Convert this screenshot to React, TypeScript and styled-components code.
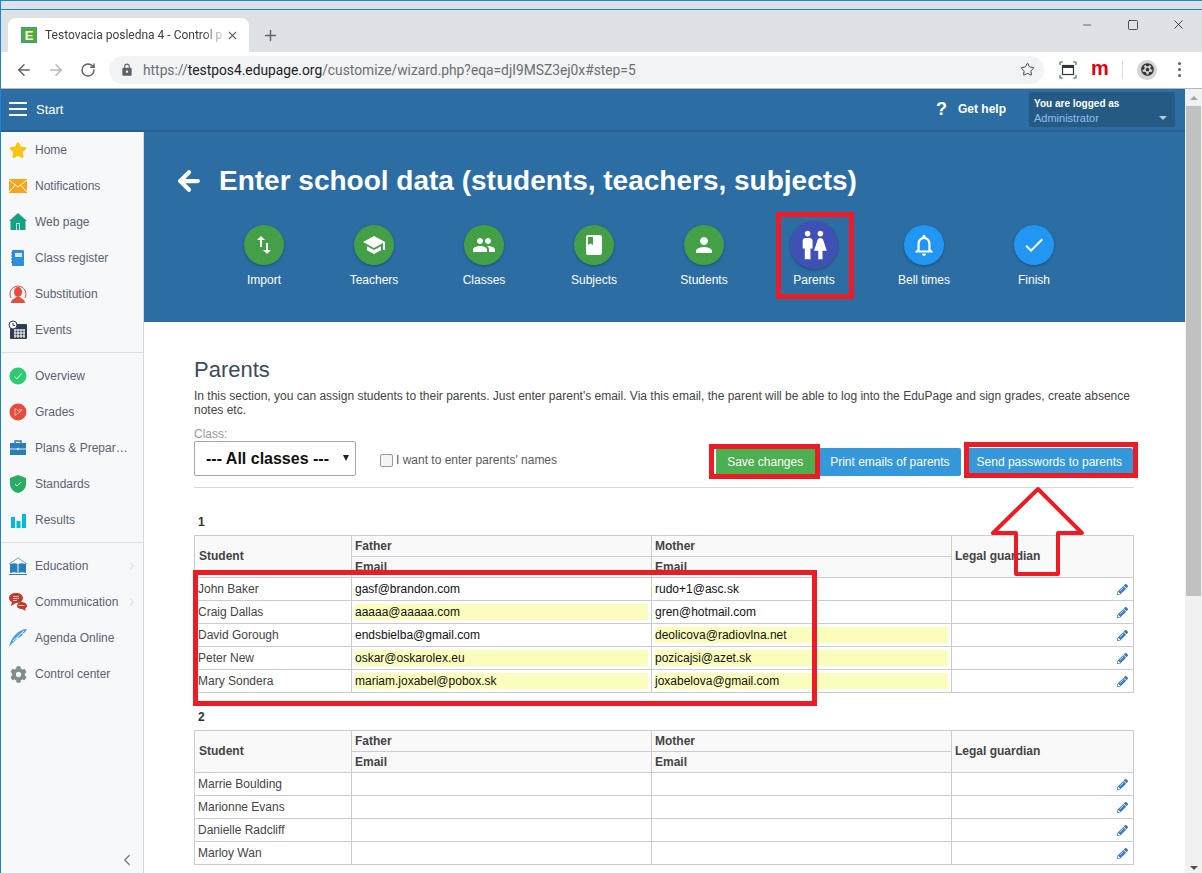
import { ReactNode } from 'react';
import styled, { createGlobalStyle } from 'styled-components';
import { ArrowLeft, ArrowRight, ChevronLeft, ChevronRight, Minus, Plus, RotateCw, Square, Star, X } from 'lucide-react';
import { FaCog, FaFutbol, FaPencilAlt, FaStar } from 'react-icons/fa';
import {
  MdBook,
  MdCheck,
  MdLock,
  MdNotificationsNone,
  MdPeople,
  MdPerson,
  MdSchool,
  MdSwapVert,
  MdWc,
} from 'react-icons/md';

const GlobalStyle = createGlobalStyle`
  html, body {
    margin: 0;
    padding: 0;
    height: 100%;
    overflow: hidden;
    background: #fff;
  }
  body {
    font-family: "Liberation Sans", Arial, sans-serif;
    font-size: 12px;
  }
  * {
    box-sizing: border-box;
  }
`;

const Window = styled.div`
  position: relative;
  display: flex;
  flex-direction: column;
  width: 1202px;
  height: 873px;
  overflow: hidden;
  border-left: 1px solid #1a86d8;
  background: #fff;
`;

const FrameTop = styled.div`
  height: 10px;
  flex-shrink: 0;
  background: #dee1e6;
  border-top: 1px solid #1a86d8;
  border-bottom: 1px solid #1a86d8;
`;

const TabStrip = styled.div`
  display: flex;
  align-items: flex-end;
  height: 42px;
  flex-shrink: 0;
  padding-left: 7px;
  background: #dee1e6;
`;

const Tab = styled.div`
  display: flex;
  align-items: center;
  width: 241px;
  height: 34px;
  padding: 0 10px 0 13px;
  background: #fff;
  border-radius: 8px 8px 0 0;
`;

const Favicon = styled.div`
  display: flex;
  align-items: center;
  justify-content: center;
  width: 16px;
  height: 16px;
  flex-shrink: 0;
  background: #4fae2c;
  border: 1px solid #3a8fd8;
  color: #fff;
  font-size: 13px;
  font-weight: 700;
  line-height: 1;
`;

const TabTitle = styled.div`
  flex: 1;
  margin-left: 8px;
  white-space: nowrap;
  font-family: Roboto, sans-serif;
  font-size: 12px;
  color: #3c4043;
  -webkit-mask-image: linear-gradient(to right, #000 88%, rgba(0, 0, 0, 0.15) 100%);
  mask-image: linear-gradient(to right, #000 88%, rgba(0, 0, 0, 0.15) 100%);
`;

const TabClose = styled.div`
  display: flex;
  margin-left: 2px;
  color: #5f6368;
`;

const NewTab = styled.div`
  display: flex;
  align-self: center;
  margin: 8px 0 0 13px;
  color: #5f6368;
`;

const WindowButtons = styled.div`
  display: flex;
  align-self: flex-start;
  align-items: center;
  gap: 31px;
  margin-left: auto;
  padding: 7px 16px 0 0;
  color: #111;
`;

const WindowButton = styled.div`
  display: flex;
  width: 15px;
  justify-content: center;
`;

const Toolbar = styled.div`
  display: flex;
  align-items: center;
  height: 37px;
  flex-shrink: 0;
  padding: 0 0 1px 13px;
  background: #fff;
  border-bottom: 1px solid #b8b8b8;
`;

const NavButton = styled.div<{ $dim?: boolean }>`
  display: flex;
  width: 20px;
  flex-shrink: 0;
  justify-content: center;
  margin-right: 12px;
  color: ${(p) => (p.$dim ? '#b5b7ba' : '#5f6368')};
`;

const AddressBar = styled.div`
  display: flex;
  align-items: center;
  width: 935px;
  height: 28px;
  flex-shrink: 0;
  margin-left: -1px;
  padding: 0 9px 0 11px;
  background: #f1f3f4;
  border-radius: 14px;
  color: #5f6368;
`;

const Url = styled.div`
  flex: 1;
  margin-left: 9px;
  font-family: Roboto, sans-serif;
  font-size: 13.8px;
  white-space: nowrap;
  color: #6b6f73;

  b {
    font-weight: 400;
    color: #202124;
  }
`;

const ToolIcon = styled.div<{ $w: number }>`
  display: flex;
  align-items: center;
  justify-content: center;
  width: ${(p) => p.$w}px;
  flex-shrink: 0;
`;

const RedM = styled.span`
  font-size: 20px;
  font-weight: 700;
  line-height: 1;
  color: #e60012;
  margin-top: -4px;
`;

const ToolSep = styled.div`
  width: 1px;
  height: 18px;
  background: #dadce0;
`;

const Avatar = styled.div`
  display: flex;
  align-items: center;
  justify-content: center;
  width: 20px;
  height: 20px;
  flex-shrink: 0;
  border-radius: 50%;
  background: #d4d4d4;
  color: #333;
`;

const Dots = styled.div`
  display: flex;
  flex-direction: column;
  gap: 3px;

  i {
    width: 3px;
    height: 3px;
    border-radius: 50%;
    background: #5f6368;
  }
`;

const Page = styled.div`
  display: flex;
  flex: 1;
  min-height: 0;
`;

const PageMain = styled.div`
  display: flex;
  flex: 1;
  flex-direction: column;
  min-width: 0;
`;

const TopBar = styled.div`
  display: flex;
  align-items: center;
  height: 43px;
  flex-shrink: 0;
  padding: 0 10px 1px 8px;
  background: #2c6ea3;
  border-bottom: 2px solid #265f8d;
  color: #fff;
`;

const Burger = styled.div`
  display: flex;
  flex-direction: column;
  gap: 4px;
  width: 18px;

  i {
    height: 2px;
    background: #fff;
  }
`;

const StartLabel = styled.span`
  margin-left: 9px;
  font-size: 13px;
`;

const HelpMark = styled.span`
  margin-left: auto;
  font-size: 18px;
  font-weight: 700;
`;

const HelpText = styled.span`
  margin-left: 11px;
  font-size: 12px;
  font-weight: 700;
`;

const UserBox = styled.div`
  position: relative;
  width: 146px;
  height: 35px;
  margin-left: 23px;
  padding: 5px 5px;
  background: #255a85;
  border-radius: 2px;
  font-size: 10px;
  line-height: 14px;
`;

const UserRole = styled.div`
  color: #8fc0ec;
  font-size: 11px;
`;

const UserCaret = styled.div`
  position: absolute;
  right: 8px;
  bottom: 7px;
  width: 0;
  height: 0;
  border-left: 4px solid transparent;
  border-right: 4px solid transparent;
  border-top: 4px solid #b9c9d8;
`;

const Body = styled.div`
  display: flex;
  flex: 1;
  min-height: 0;
`;

const Sidebar = styled.nav`
  position: relative;
  display: flex;
  flex-direction: column;
  width: 143px;
  flex-shrink: 0;
  background: #f6f8fa;
  border-right: 1px solid #d8dade;
`;

const NavItem = styled.div`
  display: flex;
  align-items: center;
  height: 36px;
  color: #5b6274;
  font-size: 12px;
  white-space: nowrap;
`;

const NavIcon = styled.div`
  display: flex;
  align-items: center;
  justify-content: center;
  width: 34px;
  flex-shrink: 0;
`;

const NavChevron = styled.div`
  display: flex;
  margin-left: auto;
  margin-right: 5px;
  color: #d3d6da;
`;

const NavDivider = styled.div`
  height: 1px;
  margin: 4px 0 5px;
  background: #dcdfe3;
`;

const Collapse = styled.div`
  display: flex;
  margin-top: auto;
  padding: 0 7px 4px 0;
  justify-content: flex-end;
  color: #6d7886;
`;

const Content = styled.main`
  flex: 1;
  min-width: 0;
`;

const Hero = styled.section`
  height: 190px;
  padding: 29px 0 0 35px;
  background: #2c6ea3;
  color: #fff;
`;

const HeroTitle = styled.div`
  display: flex;
  align-items: center;
  gap: 18px;
  height: 40px;
  font-size: 28px;
  font-weight: 700;
  white-space: nowrap;
`;

const BackIcon = styled.div`
  display: flex;
  width: 22px;

  svg {
    flex-shrink: 0;
    margin-left: -5px;
  }
`;

const Steps = styled.div`
  display: flex;
  margin: 20px 0 0 30px;
`;

const Step = styled.div`
  display: flex;
  flex-direction: column;
  align-items: center;
  width: 110px;
`;

const StepSlot = styled.div`
  display: flex;
  align-items: center;
  justify-content: center;
  height: 48px;
`;

const StepCircle = styled.div<{ $color: string; $size: number }>`
  display: flex;
  align-items: center;
  justify-content: center;
  width: ${(p) => p.$size}px;
  height: ${(p) => p.$size}px;
  border-radius: 50%;
  background: ${(p) => p.$color};
  box-shadow: 0 1px 3px rgba(0, 0, 0, 0.3);
  color: #fff;
`;

const StepLabel = styled.div`
  margin-top: 4px;
  font-size: 12px;
  line-height: 14px;
`;

const Section = styled.section`
  padding: 34px 51px 0 50px;
`;

const Heading = styled.h2`
  margin: 0;
  font-size: 22px;
  font-weight: 400;
  line-height: 28px;
  color: #3d4b5f;
`;

const Intro = styled.p`
  margin: 5px 0 0;
  font-size: 12px;
  line-height: 14px;
  color: #444;
`;

const FormBar = styled.div`
  display: flex;
  align-items: flex-start;
  height: 61px;
  margin-top: 10px;
  border-bottom: 1px solid #d8d8d8;
`;

const ClassField = styled.div`
  width: 162px;
`;

const ClassLabel = styled.div`
  font-size: 12px;
  line-height: 14px;
  color: #999;
`;

const ClassSelect = styled.div`
  position: relative;
  height: 35px;
  padding-left: 11px;
  border: 1px solid #a6a6a6;
  border-radius: 2px;
  font-size: 16px;
  font-weight: 700;
  line-height: 33px;
  color: #111;
  white-space: nowrap;
`;

const SelectCaret = styled.div`
  position: absolute;
  top: 13px;
  right: 6px;
  width: 0;
  height: 0;
  border-left: 3px solid transparent;
  border-right: 3px solid transparent;
  border-top: 6px solid #222;
`;

const NamesToggle = styled.div`
  display: flex;
  align-items: center;
  margin: 26px 0 0 24px;
  color: #5a5a5a;
  font-size: 12px;
`;

const CheckBox = styled.div`
  width: 13px;
  height: 13px;
  margin-right: 3px;
  background: #f4f4f4;
  border: 1px solid #999;
  border-radius: 2px;
`;

const Actions = styled.div`
  display: flex;
  margin: 21px 1px 0 auto;
`;

const ActionButton = styled.div<{ $color: string; $gap?: number }>`
  height: 28px;
  margin-left: ${(p) => p.$gap ?? 0}px;
  padding: 0 11px;
  background: ${(p) => p.$color};
  border-radius: 2px;
  color: #fff;
  font-size: 12px;
  line-height: 28px;
  white-space: nowrap;
`;

const SaveButton = styled(ActionButton)`
  padding-right: 13px;
`;

const GroupTitle = styled.div<{ $top: number }>`
  margin-top: ${(p) => p.$top}px;
  padding-left: 4px;
  font-size: 12px;
  font-weight: 700;
  line-height: 14px;
  color: #333;
`;

const ParentsTable = styled.table`
  width: 939px;
  margin-top: 6px;
  border-collapse: collapse;
  table-layout: fixed;
  font-size: 12px;
`;

const HeadCell = styled.th`
  height: 21px;
  padding: 0 3px;
  background: #f9f9f9;
  border: 1px solid #ccc;
  color: #444;
  font-weight: 700;
  text-align: left;
`;

const SpanHead = styled(HeadCell)<{ $left?: number }>`
  padding-left: ${(p) => p.$left ?? 3}px;
  padding-bottom: 2px;
`;

const Cell = styled.td`
  height: 23px;
  padding: 0 3px;
  border: 1px solid #ccc;
  color: #444;
`;

const EmailField = styled.div<{ $filled?: boolean }>`
  height: 16px;
  background: ${(p) => (p.$filled ? '#fbfdbd' : 'transparent')};
  color: #111;
  line-height: 16px;
`;

const EditCell = styled(Cell)`
  padding-right: 5px;
  text-align: right;
  color: #3a7ab8;
  line-height: 0;
`;

const Scrollbar = styled.div`
  display: flex;
  flex-direction: column;
  align-items: center;
  width: 17px;
  flex-shrink: 0;
  background: #f1f1f1;
`;

const ScrollArrow = styled.div<{ $down?: boolean }>`
  width: 0;
  height: 0;
  margin: ${(p) => (p.$down ? 'auto 0 3px' : '7px 0 0')};
  border-left: 4px solid transparent;
  border-right: 4px solid transparent;
  border-bottom: ${(p) => (p.$down ? '0' : '4px solid #a3a3a3')};
  border-top: ${(p) => (p.$down ? '4px solid #505050' : '0')};
`;

const ScrollThumb = styled.div`
  width: 15px;
  height: 490px;
  margin-top: 6px;
  background: #c1c1c1;
`;

const Highlight = styled.div<{ $x: number; $y: number; $w: number; $h: number }>`
  position: absolute;
  left: ${(p) => p.$x}px;
  top: ${(p) => p.$y}px;
  width: ${(p) => p.$w}px;
  height: ${(p) => p.$h}px;
  border: 5px solid #ed1c24;
  pointer-events: none;
`;

const ArrowMark = styled.svg`
  position: absolute;
  left: 985px;
  top: 483px;
`;

const IconSvg = ({ children }: { children: ReactNode }) => (
  <svg width="20" height="20" viewBox="0 0 20 20">
    {children}
  </svg>
);

const navTop = [
  {
    label: 'Home',
    icon: <FaStar size={18} color="#f5c510" />,
  },
  {
    label: 'Notifications',
    icon: (
      <IconSvg>
        <rect x="1" y="3" width="18" height="14" fill="#f9a51a" />
        <path d="M1 4l9 7 9-7M1 16l6.5-7M19 16l-6.5-7" fill="none" stroke="#fff" strokeWidth="1" />
      </IconSvg>
    ),
  },
  {
    label: 'Web page',
    icon: (
      <IconSvg>
        <path d="M10 1l9 8h-1.500v9h-15V9H1z" fill="#16a085" />
        <rect x="8" y="11" width="4" height="7" fill="#b9e2d8" />
        <rect x="9" y="12" width="2" height="6" fill="#16a085" />
      </IconSvg>
    ),
  },
  {
    label: 'Class register',
    icon: (
      <IconSvg>
        <rect x="4" y="2" width="12" height="16" rx="1" fill="#2f8fdd" />
        <rect x="7" y="5" width="7" height="4" fill="#d5e9f8" />
        <path d="M3 5h2M3 8h2M3 11h2M3 14h2" stroke="#1f6fb0" strokeWidth="1" />
      </IconSvg>
    ),
  },
  {
    label: 'Substitution',
    icon: (
      <IconSvg>
        <path d="M3 14a8 8 0 1 1 14 0" fill="none" stroke="#e74c3c" strokeWidth="1" />
        <ellipse cx="10" cy="8" rx="4" ry="5" fill="#e74c3c" />
        <path d="M3 19c0-4 4-4 5-6h4c1 2 5 2 5 6z" fill="#e74c3c" />
      </IconSvg>
    ),
  },
  {
    label: 'Events',
    icon: (
      <IconSvg>
        <rect x="2" y="4" width="17" height="15" rx="1" fill="#2c3e50" />
        <path d="M6 10h11M6 13h11M6 16h11M7 9v9M10 9v9M13 9v9M16 9v9" stroke="#fff" strokeWidth="1" />
        <circle cx="5" cy="5" r="4" fill="#fff" stroke="#2c3e50" strokeWidth="1" />
        <path d="M5 3v2.500h2" fill="none" stroke="#2c3e50" strokeWidth="1" />
      </IconSvg>
    ),
  },
];

const navMiddle = [
  {
    label: 'Overview',
    icon: (
      <IconSvg>
        <circle cx="10" cy="10" r="8.500" fill="#2ecc71" />
        <path d="M6.500 10.500l2.500 2.500 4.500-5.500" fill="none" stroke="#fff" strokeWidth="1" />
      </IconSvg>
    ),
  },
  {
    label: 'Grades',
    icon: (
      <IconSvg>
        <circle cx="10" cy="10" r="8.500" fill="#e74c3c" />
        <path d="M7 6.500v7l5-3.500zM11 7l3 2M14 7l-2 3" fill="none" stroke="#f8c9c3" strokeWidth="0.800" />
      </IconSvg>
    ),
  },
  {
    label: 'Plans & Prepar\u2026',
    icon: (
      <IconSvg>
        <path d="M7 5V3h6v2" fill="none" stroke="#2980b9" strokeWidth="1.500" />
        <rect x="2" y="5" width="16" height="12" fill="#2980b9" />
        <path d="M2 11h16" stroke="#d5e6f2" strokeWidth="1" />
        <circle cx="10" cy="11" r="1.200" fill="#d5e6f2" />
      </IconSvg>
    ),
  },
  {
    label: 'Standards',
    icon: (
      <IconSvg>
        <path d="M10 1l8 3v6c0 5-4 8-8 9-4-1-8-4-8-9V4z" fill="#27ae60" />
        <path d="M7 10l2 2 4-4" fill="none" stroke="#fff" strokeWidth="1" />
      </IconSvg>
    ),
  },
  {
    label: 'Results',
    icon: (
      <IconSvg>
        <rect x="3" y="7" width="4" height="11" fill="#00bcd4" />
        <rect x="8.500" y="11" width="4" height="7" fill="#00bcd4" />
        <rect x="14" y="4" width="4" height="14" fill="#00bcd4" />
      </IconSvg>
    ),
  },
];

const navBottom = [
  {
    label: 'Education',
    more: true,
    icon: (
      <IconSvg>
        <path d="M1 8l9-6 9 6" fill="none" stroke="#5da5dc" strokeWidth="1" />
        <path d="M2 8c3-1 6-1 7.500 0v9C8 16 5 16 2 17zM18 8c-3-1-6-1-7.500 0v9c1.500-1 4.500-1 7.500 0z" fill="#2980b9" />
        <path d="M1 18.500h18" stroke="#2980b9" strokeWidth="1" />
      </IconSvg>
    ),
  },
  {
    label: 'Communication',
    more: true,
    icon: (
      <IconSvg>
        <path d="M8 1c4 0 7 2 7 5s-3 5-7 5l-5 3 1-4C2 9 1 8 1 6c0-3 3-5 7-5z" fill="#c0392b" />
        <path d="M5 4.500h6M5 6.500h6M5 8.500h4" stroke="#f4d4cf" strokeWidth="0.900" />
        <path d="M13 10c3 0 6 1 6 4 0 1-1 2-2 3l1 2-4-2c-3 0-5-1-5-3 0-2 2-4 4-4z" fill="#c0392b" />
        <path d="M10.500 13.500h6" stroke="#f4d4cf" strokeWidth="0.900" />
      </IconSvg>
    ),
  },
  {
    label: 'Agenda Online',
    icon: (
      <IconSvg>
        <path d="M1 19c1-5 3-9 7-13 3-3 7-5 11-5-1 2-2 3-3 4l-3 1 2 0c-1 2-3 3-5 4l-2 0 1 1c-2 2-5 4-8 8z" fill="#4a9fe0" />
        <path d="M5 13L16 3" stroke="#f6f8fa" strokeWidth="1" />
      </IconSvg>
    ),
  },
  {
    label: 'Control center',
    icon: <FaCog size={17} color="#7f8c8d" />,
  },
];

const steps = [
  { label: 'Import', color: '#43a047', icon: <MdSwapVert size={24} /> },
  { label: 'Teachers', color: '#43a047', icon: <MdSchool size={24} /> },
  { label: 'Classes', color: '#43a047', icon: <MdPeople size={24} /> },
  { label: 'Subjects', color: '#43a047', icon: <MdBook size={24} /> },
  { label: 'Students', color: '#43a047', icon: <MdPerson size={24} /> },
  { label: 'Parents', color: '#3f51b5', icon: <MdWc size={34} />, size: 48 },
  { label: 'Bell times', color: '#2196f3', icon: <MdNotificationsNone size={26} /> },
  { label: 'Finish', color: '#2196f3', icon: <MdCheck size={24} /> },
];

const firstClass = [
  { name: 'John Baker', father: 'gasf@brandon.com', mother: 'rudo+1@asc.sk' },
  { name: 'Craig Dallas', father: 'aaaaa@aaaaa.com', fatherNew: true, mother: 'gren@hotmail.com' },
  { name: 'David Gorough', father: 'endsbielba@gmail.com', mother: 'deolicova@radiovlna.net', motherNew: true },
  { name: 'Peter New', father: 'oskar@oskarolex.eu', fatherNew: true, mother: 'pozicajsi@azet.sk', motherNew: true },
  { name: 'Mary Sondera', father: 'mariam.joxabel@pobox.sk', fatherNew: true, mother: 'joxabelova@gmail.com', motherNew: true },
];

const secondClass = [
  { name: 'Marrie Boulding', father: '', mother: '' },
  { name: 'Marionne Evans', father: '', mother: '' },
  { name: 'Danielle Radcliff', father: '', mother: '' },
  { name: 'Marloy Wan', father: '', mother: '' },
];

type Row = { name: string; father: string; mother: string; fatherNew?: boolean; motherNew?: boolean };

function ClassTable({ rows }: { rows: Row[] }) {
  return (
    <ParentsTable>
      <colgroup>
        <col width={157} />
        <col width={300} />
        <col width={300} />
        <col width={182} />
      </colgroup>
      <thead>
        <tr>
          <SpanHead rowSpan={2} $left={4}>
            Student
          </SpanHead>
          <HeadCell>Father</HeadCell>
          <HeadCell>Mother</HeadCell>
          <SpanHead rowSpan={2}>Legal guardian</SpanHead>
        </tr>
        <tr>
          <HeadCell>Email</HeadCell>
          <HeadCell>Email</HeadCell>
        </tr>
      </thead>
      <tbody>
        {rows.map((row) => (
          <tr key={row.name}>
            <Cell>{row.name}</Cell>
            <Cell>
              <EmailField $filled={row.fatherNew}>{row.father}</EmailField>
            </Cell>
            <Cell>
              <EmailField $filled={row.motherNew}>{row.mother}</EmailField>
            </Cell>
            <EditCell>
              <FaPencilAlt size={11} />
            </EditCell>
          </tr>
        ))}
      </tbody>
    </ParentsTable>
  );
}

function NavList({ items }: { items: { label: string; icon: ReactNode; more?: boolean }[] }) {
  return (
    <>
      {items.map((item) => (
        <NavItem key={item.label}>
          <NavIcon>{item.icon}</NavIcon>
          {item.label}
          {item.more && (
            <NavChevron>
              <ChevronRight size={12} />
            </NavChevron>
          )}
        </NavItem>
      ))}
    </>
  );
}

export default function App() {
  return (
    <>
      <GlobalStyle />
      <Window>
        <FrameTop />
        <TabStrip>
          <Tab>
            <Favicon>E</Favicon>
            <TabTitle>Testovacia posledna 4 - Control p</TabTitle>
            <TabClose>
              <X size={13} strokeWidth={2} />
            </TabClose>
          </Tab>
          <NewTab>
            <Plus size={17} strokeWidth={2} />
          </NewTab>
          <WindowButtons>
            <WindowButton>
              <Minus size={12} strokeWidth={1.2} />
            </WindowButton>
            <WindowButton>
              <Square size={12} strokeWidth={1.4} />
            </WindowButton>
            <WindowButton>
              <X size={15} strokeWidth={1.2} />
            </WindowButton>
          </WindowButtons>
        </TabStrip>
        <Toolbar>
          <NavButton>
            <ArrowLeft size={18} strokeWidth={2} />
          </NavButton>
          <NavButton $dim>
            <ArrowRight size={18} strokeWidth={2} />
          </NavButton>
          <NavButton>
            <RotateCw size={16} strokeWidth={2.2} />
          </NavButton>
          <AddressBar>
            <MdLock size={14} />
            <Url>
              https://<b>testpos4.edupage.org</b>/customize/wizard.php?eqa=djI9MSZ3ej0x#step=5
            </Url>
            <Star size={15} strokeWidth={1.6} color="#444" />
          </AddressBar>
          <ToolIcon $w={48}>
            <svg width="18" height="18" viewBox="0 0 18 18">
              <path d="M1 4V1h3M14 1h3v3M17 14v3h-3M4 17H1v-3" fill="none" stroke="#2e8b35" strokeWidth="1.200" />
              <rect x="3.500" y="4.500" width="11" height="9" fill="none" stroke="#333" strokeWidth="1.200" />
              <path d="M3.500 6h11" stroke="#333" strokeWidth="2" />
            </svg>
          </ToolIcon>
          <ToolIcon $w={16}>
            <RedM>m</RedM>
          </ToolIcon>
          <ToolIcon $w={29}>
            <ToolSep />
          </ToolIcon>
          <Avatar>
            <FaFutbol size={13} />
          </Avatar>
          <ToolIcon $w={44}>
            <Dots>
              <i />
              <i />
              <i />
            </Dots>
          </ToolIcon>
        </Toolbar>
        <Page>
          <PageMain>
            <TopBar>
              <Burger>
                <i />
                <i />
                <i />
              </Burger>
              <StartLabel>Start</StartLabel>
              <HelpMark>?</HelpMark>
              <HelpText>Get help</HelpText>
              <UserBox>
                <b>You are logged as</b>
                <UserRole>Administrator</UserRole>
                <UserCaret />
              </UserBox>
            </TopBar>
            <Body>
              <Sidebar>
                <NavList items={navTop} />
                <NavDivider />
                <NavList items={navMiddle} />
                <NavDivider />
                <NavList items={navBottom} />
                <Collapse>
                  <ChevronLeft size={18} strokeWidth={1.6} />
                </Collapse>
              </Sidebar>
              <Content>
                <Hero>
                  <HeroTitle>
                    <BackIcon>
                      <ArrowLeft size={30} strokeWidth={3.4} />
                    </BackIcon>
                    Enter school data (students, teachers, subjects)
                  </HeroTitle>
                  <Steps>
                    {steps.map((step) => (
                      <Step key={step.label}>
                        <StepSlot>
                          <StepCircle $color={step.color} $size={step.size ?? 40}>
                            {step.icon}
                          </StepCircle>
                        </StepSlot>
                        <StepLabel>{step.label}</StepLabel>
                      </Step>
                    ))}
                  </Steps>
                </Hero>
                <Section>
                  <Heading>Parents</Heading>
                  <Intro>
                    In this section, you can assign students to their parents. Just enter parent's email. Via this
                    email, the parent will be able to log into the EduPage and sign grades, create absence notes etc.
                  </Intro>
                  <FormBar>
                    <ClassField>
                      <ClassLabel>Class:</ClassLabel>
                      <ClassSelect>
                        --- All classes ---
                        <SelectCaret />
                      </ClassSelect>
                    </ClassField>
                    <NamesToggle>
                      <CheckBox />I want to enter parents' names
                    </NamesToggle>
                    <Actions>
                      <SaveButton $color="#4caf50">Save changes</SaveButton>
                      <ActionButton $color="#3498db" $gap={3}>
                        Print emails of parents
                      </ActionButton>
                      <ActionButton $color="#3498db" $gap={5}>
                        Send passwords to parents
                      </ActionButton>
                    </Actions>
                  </FormBar>
                  <GroupTitle $top={27}>1</GroupTitle>
                  <ClassTable rows={firstClass} />
                  <GroupTitle $top={17}>2</GroupTitle>
                  <ClassTable rows={secondClass} />
                </Section>
              </Content>
            </Body>
          </PageMain>
          <Scrollbar>
            <ScrollArrow />
            <ScrollThumb />
            <ScrollArrow $down />
          </Scrollbar>
        </Page>
        <Highlight $x={775} $y={212} $w={78} $h={87} />
        <Highlight $x={708} $y={444} $w={111} $h={35} />
        <Highlight $x={963} $y={442} $w={174} $h={36} />
        <Highlight $x={192} $y={570} $w={624} $h={136} />
        <ArrowMark width="100" height="96" viewBox="0 0 100 96">
          <path
            d="M52 6L7 50H30V91H72V50H96z"
            fill="none"
            stroke="#ed1c24"
            strokeWidth="4"
            strokeLinejoin="round"
          />
        </ArrowMark>
      </Window>
    </>
  );
}
